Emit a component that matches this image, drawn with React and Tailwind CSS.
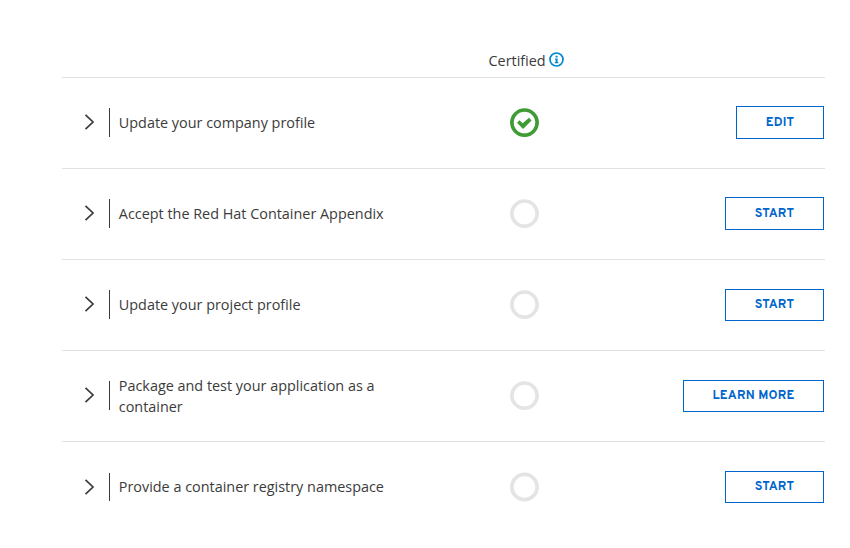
const rows = [
  { title: 'Update your company profile', action: 'EDIT', done: true, width: 'w-[88px]', height: 'h-[33px]', top: 'mt-[28px]', bar: 'h-[29px]' },
  { title: 'Accept the Red Hat Container Appendix', action: 'START', width: 'w-[99px]', height: 'h-[33px]', top: 'mt-[28px]', bar: 'h-[29px]' },
  { title: 'Update your project profile', action: 'START', width: 'w-[99px]', height: 'h-[32px]', top: 'mt-[29px]', bar: 'h-[29px]' },
  { title: 'Package and test your application as a container', action: 'LEARN MORE', width: 'w-[141px]', height: 'h-[32px]', top: 'mt-[29px]', bar: 'h-[29px]' },
  { title: 'Provide a container registry namespace', action: 'START', width: 'w-[99px]', height: 'h-[32px]', top: 'mt-[29px]', bar: 'mt-px h-[28px]', last: true },
];

function Chevron({ last }) {
  return (
    <svg className={`ml-[22px] h-4 w-[11px] shrink-0 ${last ? 'mt-[7px]' : 'mt-[6px]'}`} viewBox="0 0 11 16" fill="none" stroke="#3b3b3b" strokeWidth="1.7">
      <path d="M1.5 0.8 L9 8 L1.5 15.2" />
    </svg>
  );
}

function Status({ done, last }) {
  return (
    <svg className="h-[31px] w-[29px]" viewBox="0 0 29 31" fill="none">
      <g className={last ? 'translate-y-[0.4px]' : ''}>
        <circle cx="14.5" cy="14.6" r="12.6" stroke={done ? '#3f9c35' : '#e4e4e4'} strokeWidth="3.7" />
        {done && <path fill="#3f9c35" d="M7 14.7 L9.5 12.2 L12.7 15.2 L19 9.7 L21.6 12.4 L13 20.9 Z" />}
      </g>
    </svg>
  );
}

function InfoIcon() {
  return (
    <svg className="ml-[3.5px] mt-[-2px] h-[15px] w-[15px]" viewBox="0 0 15 15">
      <circle cx="7.5" cy="7.5" r="6.5" fill="none" stroke="#0088ce" strokeWidth="1.7" />
      <path fill="#0088ce" d="M6.6 3.7h2v1.7h-2z M6 6.4h2.6v3.5h.8v1.3H5.8V9.9h.8V7.6H6z" />
    </svg>
  );
}

export default function App() {
  return (
    <div className="h-[548px] w-[850px] overflow-hidden bg-white pl-[62px] pt-[50px] font-['Open_Sans',sans-serif] text-[14.4px] text-[#3b3b3b]">
      <div className="flex h-[27px] items-start pl-[426.5px]">
        <div className="flex items-center leading-[21px]">
          <span>Certified</span>
          <InfoIcon />
        </div>
      </div>
      {rows.map((row) => (
        <div key={row.title} className="flex h-[91px] w-[763px] border-t border-[#e2e2e2]">
          <div className="mt-[30px] flex h-[29px] w-[448px]">
            <Chevron last={row.last} />
            <div className={`ml-[14px] w-px shrink-0 bg-[#3b3b3b] ${row.bar}`} />
            <div className="ml-[8.8px] flex h-[29px] w-[280px] items-center leading-[21px]">{row.title}</div>
          </div>
          <div className="mt-[30px]">
            <Status done={row.done} last={row.last} />
          </div>
          <button
            className={`ml-auto mr-px flex items-center justify-center border border-[#0066cc] font-['Overpass','Roboto',sans-serif] text-[12.5px] font-bold leading-[18px] tracking-[0.2px] text-[#0066cc] ${row.width} ${row.height} ${row.top}`}
          >
            {row.action}
          </button>
        </div>
      ))}
    </div>
  );
}
